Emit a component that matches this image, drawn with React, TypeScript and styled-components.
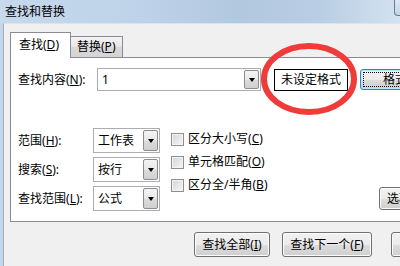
import { Fragment } from "react";
import styled, { createGlobalStyle } from "styled-components";

const GlobalStyle = createGlobalStyle`
  html, body {
    margin: 0;
    padding: 0;
    background: #f0f0f0;
  }
  body {
    font-family: "Noto Sans", "Noto Sans CJK SC", sans-serif;
    font-size: 12px;
    color: #000;
  }
`;

const Window = styled.div`
  position: relative;
  width: 400px;
  height: 266px;
  overflow: hidden;
  display: flex;
  flex-direction: column;
  background: #f0f0f0;
`;

const TitleBar = styled.div`
  height: 23px;
  flex-shrink: 0;
  display: flex;
  justify-content: space-between;
  align-items: flex-start;
  padding-left: 5px;
  background: linear-gradient(90deg, #c6d9ed 0%, #bed3e9 35%, #b2c8df 60%, #b9cee4 80%, #d2e2f1 100%);
`;

const Title = styled.span`
  line-height: 23px;
  font-size: 12px;
`;

const TitleButton = styled.div`
  width: 30px;
  height: 15px;
  margin-right: -26px;
  border: 1px solid #6a7b92;
  border-top: none;
  border-radius: 0 0 0 4px;
  background: linear-gradient(#dfe8f2, #c3d3e4);
`;

const Frame = styled.div`
  flex: 1;
  display: flex;
  border-left: 3px solid #c3d6ea;
`;

const Inner = styled.div`
  flex: 1;
  display: flex;
  flex-direction: column;
  border-left: 1px solid #a3afbd;
  border-top: 1px solid #dde3ea;
  padding: 8px 0 0 6px;
`;

const TabStrip = styled.div`
  display: flex;
  align-items: flex-end;
  height: 25px;
`;

const Tab = styled.div<{ $active?: boolean }>`
  position: relative;
  z-index: ${(p) => (p.$active ? 1 : 0)};
  box-sizing: border-box;
  height: ${(p) => (p.$active ? "26px" : "21px")};
  margin-bottom: ${(p) => (p.$active ? "-1px" : "0")};
  width: ${(p) => (p.$active ? "61px" : "52px")};
  border: 1px solid #898c95;
  border-bottom: none;
  border-left: ${(p) => (p.$active ? "1px solid #898c95" : "none")};
  background: ${(p) => (p.$active ? "#fff" : "linear-gradient(#f3f3f3, #e6e6e6 50%, #d9d9d9 51%, #d4d4d4)")};
  display: flex;
  align-items: center;
  padding-left: ${(p) => (p.$active ? "8px" : "6px")};
  padding-bottom: ${(p) => (p.$active ? "2px" : "0")};
  line-height: 1;
`;

const Panel = styled.div`
  box-sizing: border-box;
  width: 480px;
  flex-shrink: 0;
  height: 165px;
  border: 1px solid #898c95;
  background: #fff;
  padding: 10px 0 0 7px;
  display: flex;
  flex-direction: column;
`;

const FindRow = styled.div`
  display: flex;
  align-items: center;
  height: 23px;

  & > * {
    flex-shrink: 0;
  }
`;

const Label = styled.div<{ $w: number }>`
  width: ${(p) => p.$w}px;
  flex-shrink: 0;
  line-height: 1;
  white-space: nowrap;
`;

const Field = styled.div<{ $w: number; $h: number }>`
  box-sizing: border-box;
  width: ${(p) => p.$w}px;
  height: ${(p) => p.$h}px;
  border: 1px solid #abadb3;
  background: #fff;
  display: flex;
  align-items: center;
  padding-left: 4px;
`;

const FieldText = styled.span`
  flex: 1;
  line-height: 1;
  white-space: nowrap;
`;

const DropButton = styled.div`
  box-sizing: border-box;
  width: 15px;
  align-self: stretch;
  margin: 1px;
  border: 1px solid #8c8c8c;
  border-radius: 2px;
  background: linear-gradient(#f4f4f4, #e8e8e8 50%, #dcdcdc 51%, #d0d0d0);
  display: flex;
  align-items: center;
  justify-content: center;

  &::after {
    content: "";
    border-left: 3.5px solid transparent;
    border-right: 3.5px solid transparent;
    border-top: 4px solid #000;
  }
`;

const FormatBox = styled.div`
  box-sizing: border-box;
  width: 74px;
  height: 22px;
  margin-left: 13px;
  border: 1px solid #000;
  background: #fff;
  display: flex;
  align-items: center;
  justify-content: center;
  line-height: 1;
  white-space: nowrap;
`;

const Button = styled.div<{ $w: number; $focused?: boolean }>`
  box-sizing: border-box;
  width: ${(p) => p.$w}px;
  height: ${(p) => (p.$focused ? "21px" : "25px")};
  flex-shrink: 0;
  border: 1px solid ${(p) => (p.$focused ? "#3c7fb1" : "#707070")};
  border-radius: 3px;
  background: linear-gradient(#f2f2f2, #ebebeb 50%, #dddddd 51%, #cfcfcf);
  box-shadow: inset 0 0 0 1px ${(p) => (p.$focused ? "#b9e3f8" : "#fcfcfc")};
  display: flex;
  align-items: center;
  justify-content: center;
  line-height: 1;
  white-space: nowrap;
  position: relative;

  &::before {
    content: "";
    display: ${(p) => (p.$focused ? "block" : "none")};
    position: absolute;
    inset: 2px;
    border: 1px dotted #000;
  }
`;

const FormatButton = styled(Button)`
  margin-left: 12px;
  justify-content: flex-start;
  padding-left: 22px;
`;

const Lower = styled.div`
  display: flex;
  margin-top: 37px;

  & > * {
    flex-shrink: 0;
  }
`;

const OptionGrid = styled.div`
  display: grid;
  grid-template-columns: 75px 67px;
  grid-auto-rows: 25px;
  row-gap: 4px;
  align-items: center;
`;

const Checks = styled.div`
  width: 208px;
  margin-left: 11px;
  display: flex;
  flex-direction: column;
  gap: 1px;
`;

const CheckRow = styled.div`
  height: 22px;
  display: flex;
  align-items: center;
  gap: 4px;
  line-height: 1;
  white-space: nowrap;
`;

const CheckBox = styled.span`
  box-sizing: border-box;
  width: 13px;
  height: 13px;
  border: 1px solid #8e8f8f;
  background: linear-gradient(135deg, #d2d5da, #f7f7f7);
  box-shadow: inset 0 0 0 1px #f4f4f4;
`;

const OptionButton = styled(Button)`
  align-self: flex-end;
  margin-bottom: 1px;
  height: 23px;
  justify-content: flex-start;
  padding-left: 7px;
`;

const BottomRow = styled.div`
  display: flex;
  margin-top: 10px;
  margin-left: 184px;
  gap: 12px;
`;

const CloseButton = styled(Button)`
  margin-left: 7px;
`;

const Ring = styled.svg`
  position: absolute;
  left: 257px;
  top: 40px;
  pointer-events: none;
`;

const combos = [
  { label: "范围", key: "H", value: "工作表" },
  { label: "搜索", key: "S", value: "按行" },
  { label: "查找范围", key: "L", value: "公式" },
];

const checks = [
  { label: "区分大小写", key: "C" },
  { label: "单元格匹配", key: "O" },
  { label: "区分全/半角", key: "B" },
];

export default function App() {
  return (
    <>
      <GlobalStyle />
      <Window>
        <TitleBar>
          <Title>查找和替换</Title>
          <TitleButton />
        </TitleBar>
        <Frame>
          <Inner>
            <TabStrip>
              <Tab $active>
                查找(<u>D</u>)
              </Tab>
              <Tab>
                替换(<u>P</u>)
              </Tab>
            </TabStrip>
            <Panel>
              <FindRow>
                <Label $w={79}>
                  查找内容(<u>N</u>):
                </Label>
                <Field $w={164} $h={23}>
                  <FieldText>1</FieldText>
                  <DropButton />
                </Field>
                <FormatBox>未设定格式</FormatBox>
                <FormatButton $w={80} $focused>
                  格式(<u>M</u>)...
                </FormatButton>
              </FindRow>
              <Lower>
                <OptionGrid>
                  {combos.map((c) => (
                    <Fragment key={c.key}>
                      <Label $w={75}>
                        {c.label}(<u>{c.key}</u>):
                      </Label>
                      <Field $w={67} $h={25}>
                        <FieldText>{c.value}</FieldText>
                        <DropButton />
                      </Field>
                    </Fragment>
                  ))}
                </OptionGrid>
                <Checks>
                  {checks.map((c) => (
                    <CheckRow key={c.key}>
                      <CheckBox />
                      <span>
                        {c.label}(<u>{c.key}</u>)
                      </span>
                    </CheckRow>
                  ))}
                </Checks>
                <OptionButton $w={80}>
                  选项(<u>T</u>) &lt;&lt;
                </OptionButton>
              </Lower>
            </Panel>
            <BottomRow>
              <Button $w={76}>
                查找全部(<u>I</u>)
              </Button>
              <Button $w={90}>
                查找下一个(<u>F</u>)
              </Button>
              <CloseButton $w={80}>关闭</CloseButton>
            </BottomRow>
          </Inner>
        </Frame>
        <Ring width="104" height="78" viewBox="0 0 104 78">
          <ellipse cx="52" cy="39" rx="45" ry="33" fill="none" stroke="#f03b3b" strokeWidth="6" />
        </Ring>
      </Window>
    </>
  );
}
